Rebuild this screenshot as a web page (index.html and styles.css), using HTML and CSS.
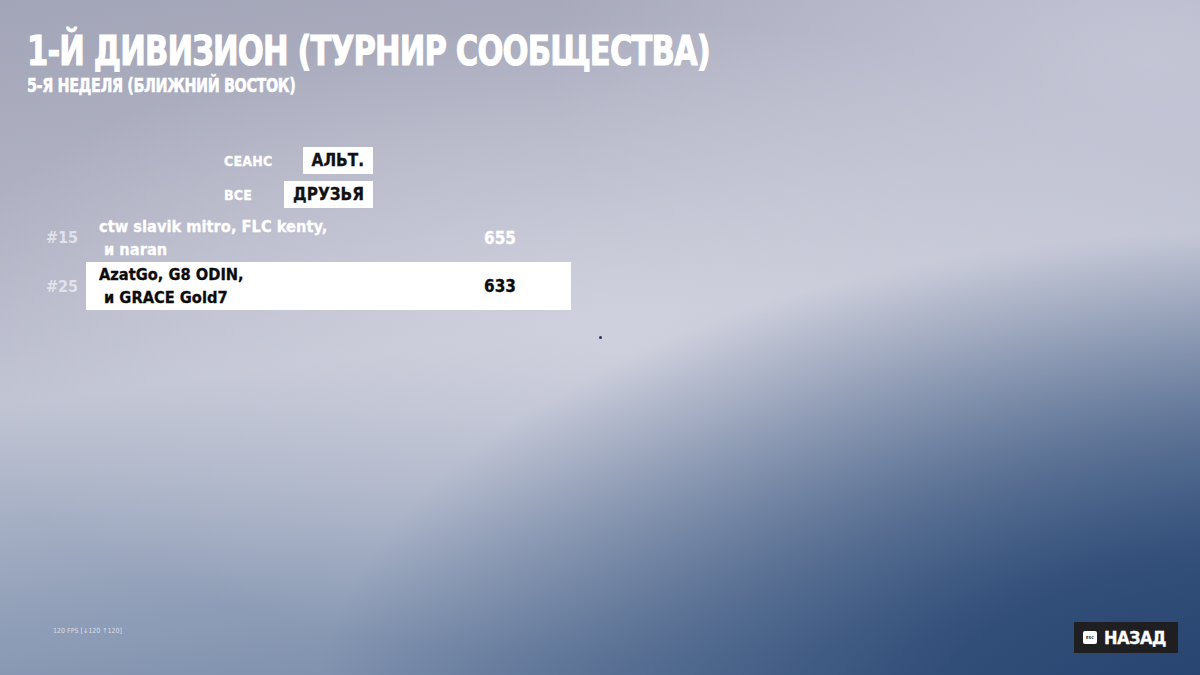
FILE: index.html
```html
<!DOCTYPE html>
<html lang="ru">
<head>
<meta charset="utf-8">
<link rel="stylesheet" href="styles.css">
</head>
<body>
<div class="page">
  <header class="head">
    <h1 class="title">1-Й ДИВИЗИОН (ТУРНИР СООБЩЕСТВА)</h1>
    <div class="subtitle">5-Я НЕДЕЛЯ (БЛИЖНИЙ ВОСТОК)</div>
  </header>

  <div class="filters">
    <div class="flabel">СЕАНС</div><div class="fbox">АЛЬТ.</div>
    <div class="flabel">ВСЕ</div><div class="fbox">ДРУЗЬЯ</div>
  </div>

  <div class="board">
    <div class="row">
      <div class="rank">#15</div>
      <div class="card">
        <div class="names">
          <div>ctw slavik mitro, FLC kenty,</div>
          <div class="indent">и naran</div>
        </div>
        <div class="score">655</div>
      </div>
    </div>
    <div class="row">
      <div class="rank">#25</div>
      <div class="card me">
        <div class="names">
          <div>AzatGo, G8 ODIN,</div>
          <div class="indent">и GRACE Gold7</div>
        </div>
        <div class="score">633</div>
      </div>
    </div>
  </div>

  <div class="spacer"></div>

  <footer class="foot">
    <div class="fps">120 FPS [↓120 ↑120]</div>
    <div class="back">
      <span class="esc">ESC</span>
      <span class="backtext">НАЗАД</span>
    </div>
  </footer>
  <div class="dot"></div>
</div>
</body>
</html>
```
FILE: styles.css
```css
html, body {
  margin: 0;
  padding: 0;
}
body {
  width: 1200px;
  height: 675px;
  overflow: hidden;
  font-family: "DejaVu Sans Condensed", "DejaVu Sans", sans-serif;
  font-weight: bold;
  color: #fff;
}
.page {
  position: relative;
  width: 1200px;
  height: 675px;
  display: flex;
  flex-direction: column;
  background:
    radial-gradient(ellipse 950px 500px at 1260px 730px, rgba(34,64,108,1) 0%, rgba(42,72,116,0.9) 35%, rgba(60,90,130,0) 100%),
    radial-gradient(ellipse 700px 320px at 620px 340px, rgba(214,214,226,0.75) 0%, rgba(214,214,226,0) 100%),
    radial-gradient(ellipse 600px 350px at 1150px 60px, rgba(200,202,218,0.8) 0%, rgba(200,202,218,0) 100%),
    linear-gradient(172deg, #a2a5b7 0%, #b3b5c6 30%, #bfc3d2 48%, #93a1ba 72%, #6d82a3 100%);
}
.head {
  padding: 29px 0 0 27px;
}
.title {
  margin: 0;
  font-size: 40px;
  line-height: 44px;
  font-weight: bold;
  letter-spacing: -1px;
  -webkit-text-stroke: 1px #fff;
  transform: scaleX(0.85);
  transform-origin: left center;
  white-space: nowrap;
}
.subtitle {
  margin-top: 1px;
  font-size: 20px;
  line-height: 22px;
  letter-spacing: -0.5px;
  -webkit-text-stroke: 0.5px #fff;
  transform: scaleX(0.8);
  transform-origin: left center;
  white-space: nowrap;
}
.filters {
  margin: 51px 0 0 224px;
  width: 149px;
  display: grid;
  grid-template-columns: auto auto;
  row-gap: 7px;
  align-items: center;
}
.flabel {
  justify-self: start;
  font-size: 14px;
  letter-spacing: 0.2px;
  color: #fff;
  -webkit-text-stroke: 0.3px #fff;
}
.fbox {
  justify-self: end;
  background: #fff;
  color: #111;
  height: 27px;
  line-height: 27px;
  padding: 0 9px;
  font-size: 17px;
  -webkit-text-stroke: 0.3px #111;
}
.board {
  margin: 5px 0 0 36px;
  display: flex;
  flex-direction: column;
}
.row {
  display: flex;
  align-items: center;
}
.rank {
  width: 42px;
  text-align: right;
  padding-right: 8px;
  font-size: 16px;
  color: rgba(232,234,242,0.85);
}
.card {
  width: 472px;
  height: 49px;
  padding-left: 13px;
  display: flex;
  align-items: center;
}
.card.me {
  background: #fff;
  color: #0c0c0c;
  height: 48px;
}
.names {
  width: 385px;
  font-size: 16.3px;
  line-height: 23px;
  -webkit-text-stroke: 0.3px currentColor;
}
.indent {
  padding-left: 5px;
}
.score {
  font-size: 17px;
  -webkit-text-stroke: 0.3px currentColor;
}
.spacer {
  flex: 1;
}
.foot {
  display: flex;
  align-items: center;
  justify-content: space-between;
  padding: 0 22px 22px 53px;
}
.fps {
  font-family: "DejaVu Sans Condensed", "DejaVu Sans", sans-serif;
  font-weight: normal;
  font-size: 7px;
  color: rgba(236,238,246,0.8);
  margin-top: -14px;
}
.back {
  display: flex;
  align-items: center;
  gap: 7px;
  background: #1f1f22;
  height: 31px;
  padding: 0 12px 0 9px;
}
.esc {
  width: 14px;
  height: 13px;
  background: #fff;
  border-radius: 2px;
  color: #1f1f22;
  font-size: 4px;
  line-height: 13px;
  text-align: center;
}
.backtext {
  font-size: 18px;
  letter-spacing: -0.5px;
  -webkit-text-stroke: 0.3px #fff;
}
.dot {
  position: absolute;
  left: 599px;
  top: 336px;
  width: 3px;
  height: 3px;
  border-radius: 50%;
  background: #3a2a5a;
}
```
